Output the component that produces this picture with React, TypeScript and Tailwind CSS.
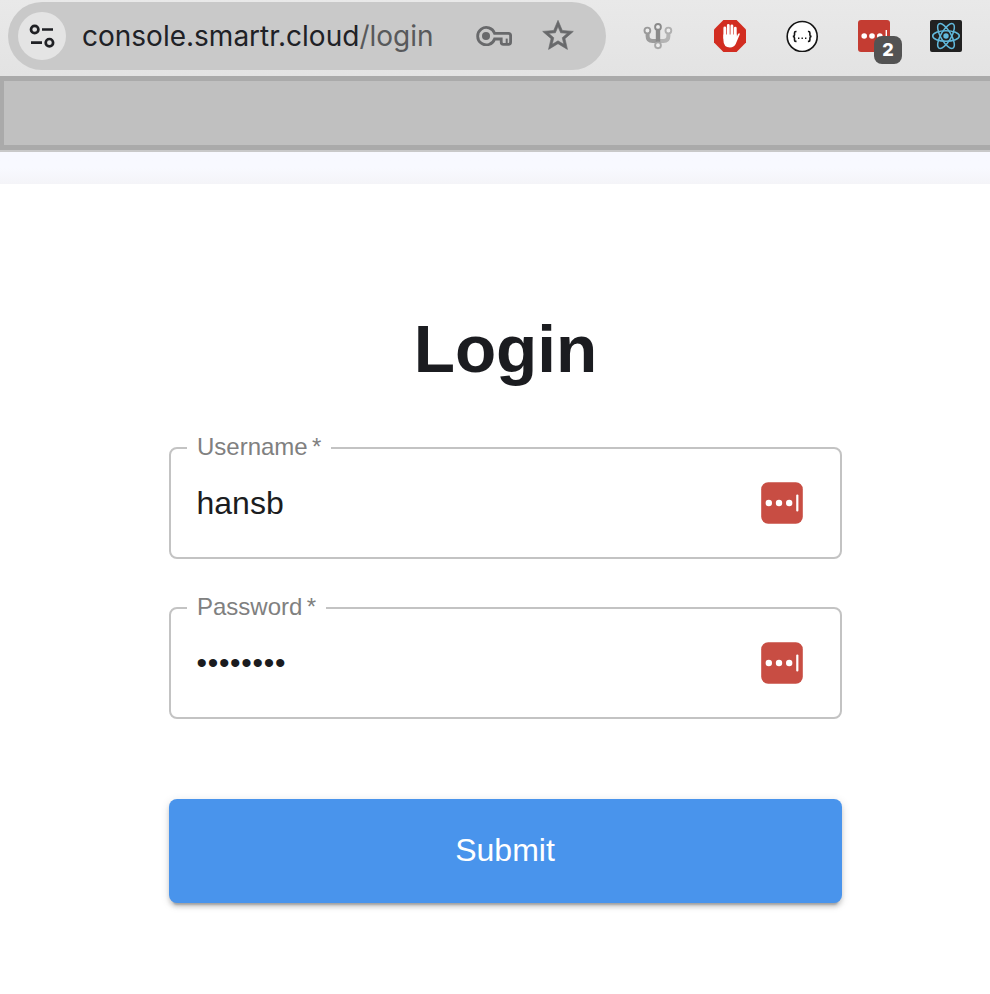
import type { ReactNode } from "react";

function TuneIcon() {
  return (
    <svg width="28" height="28" viewBox="0 0 28 28" fill="none" stroke="#1f2024" strokeWidth="2.7">
      <circle cx="6.7" cy="7.5" r="3.7" />
      <path d="M14 7.5h11M3 20.7h11" />
      <circle cx="21.4" cy="20.7" r="3.7" />
    </svg>
  );
}

function KeyIcon() {
  return (
    <svg width="36" height="20" viewBox="0 0 36 20" fill="none" stroke="#68696b" strokeWidth="2.8">
      <path d="M18.6 7.4H32.4Q34.6 7.4 34.6 9.6V16Q34.6 18.4 32.4 18.4H27.4Q25.2 18.4 25.2 16V13H18.6A8.7 8.7 0 1 1 18.6 7.4Z" />
      <circle cx="10" cy="10" r="4" fill="#68696b" stroke="none" />
      <path d="M30.7 12.6V17.5" strokeWidth="2" />
    </svg>
  );
}

function StarIcon() {
  return (
    <svg width="32" height="32" viewBox="1.55 1.8 20.9 20.9" fill="#68696b" stroke="#68696b" strokeWidth="0.4">
      <path d="M22 9.24l-7.19-.62L12 2 9.19 8.63 2 9.24l5.46 4.73L5.82 21 12 17.27 18.18 21l-1.63-7.03L22 9.24zM12 15.4l-3.76 2.27 1-4.28-3.32-2.88 4.38-.38L12 6.1l1.71 4.04 4.38.38-3.32 2.88 1 4.28L12 15.4z" />
    </svg>
  );
}

function ForkIcon() {
  return (
    <svg width="32" height="32" viewBox="0 0 32 32" fill="none">
      <path d="M5.6 13V16Q5.6 21 10.5 21H16" stroke="#9c9c9c" strokeWidth="4" />
      <path d="M26.4 13V16Q26.4 21 21.5 21H16" stroke="#b4b4b4" strokeWidth="4" />
      <path d="M16 9.5V23" stroke="#8a8a8a" strokeWidth="4.4" />
      <g fill="#ededed" strokeWidth="1.9">
        <circle cx="5.4" cy="10.5" r="2.9" stroke="#9a9a9a" />
        <circle cx="26.4" cy="10.5" r="2.9" stroke="#b0b0b0" />
        <circle cx="16" cy="6.9" r="2.9" stroke="#8a8a8a" />
        <circle cx="16" cy="25.3" r="2.9" stroke="#a8a8a8" />
      </g>
    </svg>
  );
}

function BlockerIcon() {
  return (
    <svg width="32" height="32" viewBox="0 0 32 32">
      <path d="M9.4 0H22.6L32 9.4V22.6L22.6 32H9.4L0 22.6V9.4Z" fill="#d22d21" />
      <g stroke="#fff" strokeWidth="2.8" strokeLinecap="round" fill="none">
        <path d="M10.8 8V18M14.3 5.4V17M17.9 5.8V17M21.3 8.2V18" />
      </g>
      <path d="M9.4 14.5H22.7V17L24 14Q25 12.7 25.7 13.4Q26 13.8 25.5 15L21.7 24Q20 27.4 16 27.4Q9.4 27.4 9.4 20Z" fill="#fff" />
    </svg>
  );
}

function BracesIcon() {
  return (
    <svg width="32" height="32" viewBox="0 0 32 32" fill="none" stroke="#151515">
      <circle cx="16.2" cy="16.5" r="15" fill="#fff" strokeWidth="1.6" />
      <path d="M10.5 11.5H9.8Q8.5 11.5 8.5 13V15Q8.5 16.4 6.8 16.4Q8.5 16.4 8.5 18V20Q8.5 21.4 9.8 21.4H10.5M21.9 11.5H22.6Q23.9 11.5 23.9 13V15Q23.9 16.4 25.6 16.4Q23.9 16.4 23.9 18V20Q23.9 21.4 22.6 21.4H21.9" strokeWidth="1.6" />
      <path d="M12 18.2H13.4M15.5 18.2H16.9M19 18.2H20.4" strokeWidth="1.5" />
    </svg>
  );
}

function ReactIcon() {
  return (
    <svg width="32" height="32" viewBox="0 0 32 32" fill="none" stroke="#61b9dc" strokeWidth="1.5">
      <rect width="32" height="32" rx="2" fill="#212121" stroke="none" />
      <ellipse cx="16" cy="16" rx="13.3" ry="5.2" />
      <ellipse cx="16" cy="16" rx="14" ry="5.2" transform="rotate(60 16 16)" />
      <ellipse cx="16" cy="16" rx="14" ry="5.2" transform="rotate(120 16 16)" />
      <circle cx="16" cy="16" r="2.7" fill="#61b9dc" stroke="none" />
    </svg>
  );
}

function VaultIcon() {
  return (
    <svg width="42" height="42" viewBox="0 0 42 42" fill="#fff">
      <rect x="0.2" y="0.2" width="41.6" height="41.6" rx="7" fill="#c84d43" />
      <circle cx="7.8" cy="21" r="3.2" />
      <circle cx="18" cy="21" r="3.2" />
      <circle cx="28.2" cy="21" r="3.2" />
      <rect x="35.2" y="12.6" width="2.2" height="17" rx="1" />
    </svg>
  );
}

function VaultExtension() {
  return (
    <div className="relative h-8 w-8">
      <svg width="32" height="32" viewBox="0 0 32 32" fill="#fff">
        <rect width="32" height="32" rx="3" fill="#c43c32" />
        <circle cx="6.2" cy="16" r="2.8" />
        <circle cx="14" cy="16" r="2.8" />
        <circle cx="21.8" cy="16" r="2.8" />
        <rect x="27.6" y="10" width="1.4" height="12" />
      </svg>
      <span className="absolute top-4 left-4 flex h-7 w-7 items-center justify-center rounded-lg bg-[#535353] font-['Inter'] text-[18px] leading-none font-extrabold text-white">
        2
      </span>
    </div>
  );
}

function Field({ label, children }: { label: string; children: ReactNode }) {
  return (
    <fieldset className="h-[125px] min-w-0 rounded-lg border-2 border-[#c3c3c3] pl-4">
      <legend className="h-7 px-2.5 text-[24px] leading-[25px] [word-spacing:-2.4px] whitespace-pre text-[#808080]">
        {label}
      </legend>
      <div className="flex h-[82px] items-center justify-between pr-[37px] pl-[9.5px]">
        {children}
        <VaultIcon />
      </div>
    </fieldset>
  );
}

export default function App() {
  return (
    <div className="flex h-[994px] w-[990px] flex-col overflow-hidden bg-white font-['Liberation_Sans',Arial,sans-serif]">
      <header className="flex h-[76px] shrink-0 items-start bg-linear-to-b from-[#e9e9e9] to-[#e3e3e3] pt-0.5 pl-2">
        <div className="flex h-[68px] w-[598px] items-center rounded-full bg-[#c9c9c9] pl-2.5">
          <div className="flex h-12 w-12 items-center justify-center rounded-full bg-[#e4e4e4]">
            <TuneIcon />
          </div>
          <div className="ml-4 w-[378px] font-['Inter',sans-serif] text-[28px] leading-none whitespace-nowrap text-[#202126]">
            console.smartr.cloud<span className="text-[#58595b]">/login</span>
          </div>
          <div className="ml-4 w-[66px]">
            <KeyIcon />
          </div>
          <StarIcon />
        </div>
        <div className="mt-[18px] ml-9 flex gap-10">
          <ForkIcon />
          <BlockerIcon />
          <BracesIcon />
          <VaultExtension />
          <ReactIcon />
        </div>
      </header>
      <div className="h-[74px] shrink-0 border-t-5 border-b-5 border-l-4 border-[#aaaaaa] bg-[#c0c0c0]" />
      <div className="h-0.5 shrink-0 bg-[#c9c9c9]" />
      <div className="h-8 shrink-0 bg-linear-to-b from-[#f8f9ff] from-50% to-[#f4f4f8]" />
      <main className="ml-[169px] flex w-[673px] flex-col pt-[130px]">
        <h1 className="h-[120px] text-center text-[67.5px] leading-[70px] font-bold text-[#1b1c20]">Login</h1>
        <div className="flex flex-col gap-[35px]">
          <Field label="Username *">
            <span className="text-[32px] leading-none text-[#1b1c20]">hansb</span>
          </Field>
          <Field label="Password *">
            <span className="pb-px text-[30px] leading-none tracking-[0.7px] text-[#1b1c20]">••••••••</span>
          </Field>
        </div>
        <button className="mt-20 h-[104px] rounded-lg bg-[#4994ec] pr-px pb-0.5 text-[32px] text-white shadow-[0_6px_2px_-4px_rgba(0,0,0,0.2),0_4px_4px_0_rgba(0,0,0,0.14),0_2px_10px_0_rgba(0,0,0,0.12)]">
          Submit
        </button>
      </main>
    </div>
  );
}
